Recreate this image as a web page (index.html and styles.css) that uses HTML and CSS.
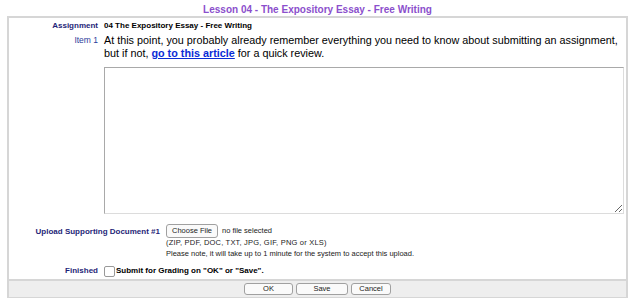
FILE: index.html
```html
<!DOCTYPE html>
<html lang="en">
<head>
    <meta charset="UTF-8">
    <title>Lesson 04 - The Expository Essay - Free Writing</title>
    <link rel="stylesheet" href="styles.css">
</head>
<body>

    <div class="page">
        <h1 class="title">Lesson 04 - The Expository Essay - Free Writing</h1>

        <div class="box">
            <div class="row row-assignment">
                <div class="label">Assignment</div>
                <div class="value strong">04 The Expository Essay - Free Writing</div>
            </div>

            <div class="row row-item">
                <div class="label label-light">Item 1</div>
                <div class="value">
                    <p class="question">At this point, you probably already remember everything you need to know about submitting an assignment,<br>
                    but if not, <a href="#">go to this article</a> for a quick review.</p>
                    <textarea class="answer"></textarea>
                </div>
            </div>

            <div class="row row-upload">
                <div class="label label-wide">Upload Supporting Document #1</div>
                <div class="value small">
                    <div class="file-line">
                        <span class="btn btn-file">Choose File</span>
                        <span>no file selected</span>
                    </div>
                    <div class="types">(ZIP, PDF, DOC, TXT, JPG, GIF, PNG or XLS)</div>
                    <div>Please note, it will take up to 1 minute for the system to accept this upload.</div>
                </div>
            </div>

            <div class="row row-finished">
                <div class="label">Finished</div>
                <div class="value strong check-line">
                    <span class="checkbox"></span>
                    <span>Submit for Grading on "OK" or "Save".</span>
                </div>
            </div>

            <!-- barra de botoes -->
            <div class="actions">
                <span class="btn btn-ok">OK</span>
                <span class="btn btn-save">Save</span>
                <span class="btn btn-cancel">Cancel</span>
            </div>
        </div>
    </div>

</body>
</html>
```

FILE: styles.css
```css
body {
    margin: 0;
    padding: 0;
    background-color: #fff;
    font-family: "Liberation Sans", Arial, sans-serif;
    color: #000;
}
.page {
    width: 621px;
    margin-left: 7px;
}
.title {
    margin: 0;
    height: 16px;
    line-height: 20px;
    font-size: 10px;
    font-weight: bold;
    color: #8b4fcc;
    text-align: center;
}
.box {
    border: 2px solid #d6d6d6;
    border-bottom-width: 1px;
}
.row {
    display: flex;
    align-items: flex-start;
}
.label {
    width: 89px;
    flex-shrink: 0;
    padding-right: 6px;
    text-align: right;
    font-size: 8px;
    font-weight: bold;
    color: #1f1f78;
}
.label-light {
    font-weight: normal;
    font-size: 8.5px;
    color: #2b3b9b;
}
.label-wide {
    width: 151px;
}
.value {
    flex: 1;
}
.strong {
    font-size: 8px;
    font-weight: bold;
}
.row-assignment {
    padding-top: 3px;
    line-height: 10px;
}
.row-item {
    padding-top: 3px;
}
.row-item .label {
    line-height: 13px;
}
.question {
    margin: 0;
    font-size: 10.8px;
    line-height: 12.5px;
}
.question a {
    color: #0a2bd6;
    font-weight: bold;
}
.answer {
    display: block;
    box-sizing: border-box;
    width: 520px;
    height: 147px;
    margin-top: 8px;
    border: 1px solid #a9a9a9;
    border-right-color: #dcdcdc;
    border-bottom-color: #dcdcdc;
    resize: both;
}
.row-upload {
    padding-top: 10px;
}
.row-upload .label {
    line-height: 16px;
}
.small {
    font-size: 7.5px;
    line-height: 10.5px;
    color: #222;
}
.types {
    letter-spacing: 0.2px;
}
.file-line {
    display: flex;
    align-items: center;
    gap: 4px;
}
.btn {
    display: inline-block;
    box-sizing: border-box;
    height: 12px;
    line-height: 10px;
    font-size: 7.5px;
    text-align: center;
    color: #222;
    background-color: #fafafa;
    border: 1px solid #a0a0a0;
    border-radius: 3px;
}
.btn-file {
    width: 52px;
    height: 14px;
    line-height: 12px;
}
.row-finished {
    padding-top: 6px;
    padding-bottom: 2px;
    line-height: 12px;
}
.check-line {
    display: flex;
    align-items: center;
    gap: 1px;
}
.checkbox {
    width: 9px;
    height: 9px;
    border: 1px solid #999;
    border-radius: 2px;
    background-color: #fff;
}
.actions {
    display: flex;
    justify-content: center;
    gap: 3px;
    padding: 2px 0 2px;
    background-color: #eeeeee;
    border-top: 2px solid #d6d6d6;
}
.btn-ok {
    width: 49px;
}
.btn-save {
    width: 52px;
}
.btn-cancel {
    width: 40px;
}
```
